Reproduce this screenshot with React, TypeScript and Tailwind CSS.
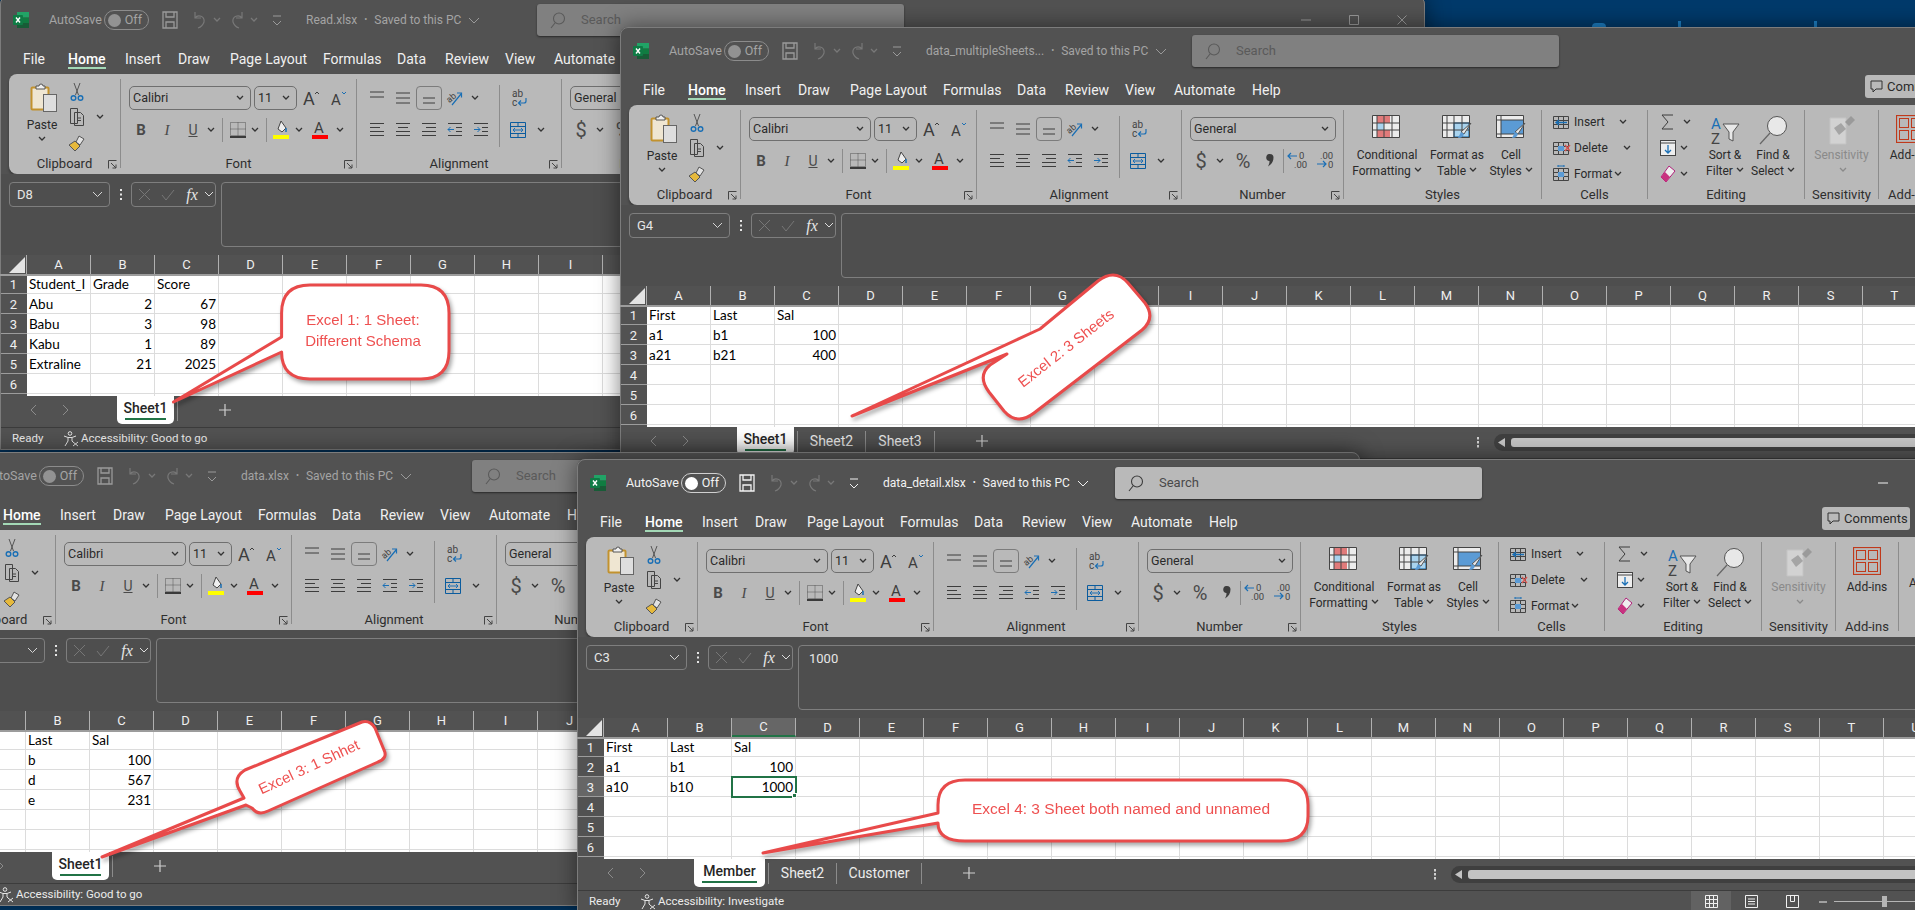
import React from "react";

const COLS = "ABCDEFGHIJKLMNOPQRSTUV".split("");
const MENU: [string, string][] = [
  ["File", "w-[45px]"],
  ["Home", "w-[57px]"],
  ["Insert", "w-[53px]"],
  ["Draw", "w-[52px]"],
  ["Page Layout", "w-[93px]"],
  ["Formulas", "w-[74px]"],
  ["Data", "w-[48px]"],
  ["Review", "w-[60px]"],
  ["View", "w-[49px]"],
  ["Automate", "w-[78px]"],
  ["Help", "w-[40px]"],
];

type IconProps = { d: string; w?: number; h?: number; s?: string; sw?: number };

// plain stroked icon, most of the small ribbon glyphs are just this
function P({ d, w = 16, h = 16, s = "#3d3d3d", sw = 1 }: IconProps) {
  return (
    <svg width={w} height={h} viewBox={`0 0 ${w} ${h}`} fill="none" stroke={s} strokeWidth={sw}>
      <path d={d} />
    </svg>
  );
}

function Chev({ c = "#333" }: { c?: string }) {
  return <P d="M1 1l3 3 3-3" w={8} h={6} s={c} sw={1.3} />;
}

function Slot({ c, children }: { c: string; children?: React.ReactNode }) {
  return <div className={`flex items-center justify-center shrink-0 ${c}`}>{children}</div>;
}

function ExcelLogo() {
  return (
    <svg width="18" height="18" viewBox="0 0 18 18">
      <rect x="5" y="1" width="12" height="5.5" fill="#21a366" />
      <rect x="5" y="6.5" width="12" height="5.5" fill="#107c41" />
      <rect x="5" y="12" width="12" height="5" fill="#185c37" />
      <rect x="1" y="4" width="10" height="10" rx="1" fill="#0f7b45" />
      <path d="M4 6.5l4 5M8 6.5l-4 5" stroke="#fff" strokeWidth="1.4" />
    </svg>
  );
}

function Paste() {
  return (
    <svg width="28" height="30" viewBox="0 0 28 30">
      <rect x="1.5" y="5.5" width="17" height="22" rx="1" fill="#efe6d2" stroke="#c2922e" strokeWidth="2" />
      <path d="M6 7V4h3a2 2 0 0 1 4 0h2v3z" fill="#efefef" stroke="#555" />
      <rect x="13.5" y="12.5" width="13" height="17" fill="#dedede" stroke="#666" />
    </svg>
  );
}

function Scissors() {
  return (
    <svg width="14" height="20" viewBox="0 0 14 20" fill="none">
      <path d="M4 1l4.500 12M10 1L5.500 13" stroke="#555" />
      <circle cx="3.500" cy="16" r="2.300" stroke="#1a6fb5" strokeWidth="1.400" />
      <circle cx="10.500" cy="16" r="2.300" stroke="#1a6fb5" strokeWidth="1.400" />
    </svg>
  );
}

function CopyIcon() {
  return <P d="M1.500 1.500h7v15h-7zM5.500 5.500h6l3 3v10h-9zM8 11h4M8 13.500h4" w={16} h={20} s="#444" />;
}

function Painter() {
  return (
    <svg width="18" height="18" viewBox="0 0 18 18">
      <path d="M11 2l5 3-4 6-4-3z" fill="#e2e2e2" stroke="#555" />
      <path d="M7 7l5 5-5 5-6-6z" fill="#e6b93c" stroke="#555" />
    </svg>
  );
}

function Launcher() {
  return <P d="M.500.500h8M.500.500v8M3 3l5 5M8 4.500V8H4.500" w={10} h={10} s="#444" />;
}

function Combo({ c, label }: { c: string; label: string }) {
  return (
    <div className={`flex items-center justify-between shrink-0 h-6 rounded-[5px] border border-[#6f6f6f] pl-[3px] pr-[6px] text-[12.500px] ${c}`}>
      <span>{label}</span>
      <Chev />
    </div>
  );
}

function BigA({ up }: { up: boolean }) {
  return (
    <svg width="18" height="18" viewBox="0 0 18 18">
      <text x="0" y="16" fontSize={up ? 18 : 15} fontFamily="Roboto" fill="#3d3d3d">A</text>
      <path d={up ? "M12 5l2-2 2 2" : "M11 3l2 2 2-2"} stroke={up ? "#3d3d3d" : "#1a6fb5"} fill="none" />
    </svg>
  );
}

function Borders() {
  return (
    <svg width="16" height="16" viewBox="0 0 16 16" fill="none">
      <path d="M.500.500h15v13H.500zM8 .500v13M.500 7h15" stroke="#555" strokeDasharray="1 1" />
      <path d="M0 15h16" stroke="#111" strokeWidth="1.600" />
    </svg>
  );
}

function FillColor() {
  return (
    <svg width="18" height="20" viewBox="0 0 18 20">
      <path d="M9 1l5 7-4 4-4-3z" fill="#eee" stroke="#444" />
      <path d="M14 8v4" stroke="#1a6fb5" strokeWidth="1.500" />
      <rect x="1" y="15" width="16" height="4" fill="#ffff00" />
    </svg>
  );
}

function FontColor() {
  return (
    <svg width="18" height="20" viewBox="0 0 18 20">
      <text x="3" y="13" fontSize="15" fontFamily="Roboto" fill="#3d3d3d">A</text>
      <rect x="1" y="15" width="16" height="4" fill="#ff0000" />
    </svg>
  );
}

function Orient() {
  return (
    <svg width="18" height="18" viewBox="0 0 18 18" fill="none">
      <text x="0" y="11" fontSize="9" fontFamily="Roboto" fill="#444" transform="rotate(-40 6 8)">ab</text>
      <path d="M6 16L15 5M11 4h4.500v4.500" stroke="#1a6fb5" strokeWidth="1.200" />
    </svg>
  );
}

function Wrap() {
  return (
    <svg width="16" height="20" viewBox="0 0 16 20" fill="none">
      <text x="1" y="9" fontSize="10" fontFamily="Roboto" fill="#444">ab</text>
      <text x="1" y="18" fontSize="10" fontFamily="Roboto" fill="#444">c</text>
      <path d="M15 10v3a2 2 0 0 1-2 2H8M10 12.500L7.500 15l2.500 2.500" stroke="#1a6fb5" strokeWidth="1.200" />
    </svg>
  );
}

function Merge() {
  return (
    <svg width="16" height="16" viewBox="0 0 16 16" fill="none">
      <path d="M.500.500h15v15H.500zM.500 4.500h15M.500 11.500h15M8 .500v4M8 11.500v4" stroke="#0b5c9e" />
      <path d="M3 8h10M5 6L3 8l2 2M11 6l2 2-2 2" stroke="#1a6fb5" />
    </svg>
  );
}

function DecShift({ left }: { left: boolean }) {
  return (
    <svg width="22" height="20" viewBox="0 0 22 20" fill="none">
      <text x={left ? 12 : 6} y="8" fontSize="9.500" fontFamily="Roboto" fill="#444">{left ? "0" : ".00"}</text>
      <text x={left ? 7 : 14} y="17" fontSize="9.500" fontFamily="Roboto" fill="#444">{left ? ".00" : "0"}</text>
      {left ? (
        <path d="M10 5H1M4 2L1 5l3 3" stroke="#1a6fb5" strokeWidth="1.200" />
      ) : (
        <path d="M3 13h9M9 10l3 3-3 3" stroke="#1a6fb5" strokeWidth="1.200" />
      )}
    </svg>
  );
}

// 28x23 table glyph used for the three Styles buttons
function GridGlyph({ kind }: { kind: "cond" | "table" | "cell" }) {
  return (
    <svg width="30" height="24" viewBox="0 0 30 24" fill="none">
      <rect x=".5" y=".5" width="27" height="22" fill="#ececec" />
      {kind === "cond" && (
        <>
          <rect x="5" y="1" width="13" height="7" fill="#e07a7a" />
          <rect x="5" y="15" width="13" height="7" fill="#e07a7a" />
          <rect x="5" y="8" width="7" height="7" fill="#a9d3ee" />
        </>
      )}
      {kind === "table" && <rect x="12" y="8" width="15" height="14" fill="#a9d3ee" stroke="#0b5c9e" />}
      {kind === "cell" && <rect x="5" y="5" width="22" height="14" fill="#5b9bd5" />}
      <path
        d={
          kind === "cell"
            ? "M.500.500h27v22H.500zM.500 5h27M5 .500v22M.500 19h27M27 .500"
            : "M.500.500h27v22H.500zM.500 8h27M.500 15h27M5 .500v22M12 .500v22M20 .500v22"
        }
        stroke="#444"
      />
      {kind !== "cond" && (
        <>
          <path d="M29 8L22 19l-3-2z" fill="#e8e8e8" stroke="#555" />
          <path d="M19 17l3 2c-1 3-3 4-6 4 1-2 2-4 3-6z" fill="#5b9bd5" />
        </>
      )}
    </svg>
  );
}

function CellsGlyph({ kind }: { kind: "insert" | "delete" | "format" }) {
  return (
    <svg width="20" height="18" viewBox="0 0 20 18" fill="none">
      <path d="M1.500 3.500h15v12h-15zM1.500 7.500h15M1.500 11.500h15M6.500 3.500v12M11.500 3.500v12" stroke="#444" />
      {kind === "insert" && <path d="M15 9.500H4M7 7L4 9.500 7 12" stroke="#1a6fb5" strokeWidth="1.400" />}
      {kind === "delete" && (
        <>
          <rect x="6" y="7" width="6" height="5" fill="#5b9bd5" />
          <path d="M13 6l5 6M18 6l-5 6" stroke="#d9534f" strokeWidth="1.300" />
        </>
      )}
      {kind === "format" && (
        <>
          <rect x="6" y="7" width="6" height="5" fill="#5b9bd5" />
          <path d="M6 1h6M6 0v2M12 0v2" stroke="#1a6fb5" />
        </>
      )}
    </svg>
  );
}

function FillDown() {
  return (
    <svg width="16" height="16" viewBox="0 0 16 16" fill="none">
      <rect x=".5" y=".5" width="15" height="15" fill="#eee" stroke="#444" />
      <path d="M.500 3h15" stroke="#444" />
      <path d="M8 5v8M5 10l3 3 3-3" stroke="#1a6fb5" strokeWidth="1.300" />
    </svg>
  );
}

function Eraser() {
  return (
    <svg width="16" height="18" viewBox="0 0 16 18">
      <path d="M9 1l6 5-9 11-5-5z" fill="#eee" stroke="#b0207a" />
      <path d="M5 7l5 5-4 5-5-5z" fill="#c8327f" />
    </svg>
  );
}

function SortIcon() {
  return (
    <svg width="30" height="30" viewBox="0 0 30 30" fill="none">
      <text x="1" y="14" fontSize="15" fontFamily="Roboto" fill="#1a6fb5">A</text>
      <text x="1" y="29" fontSize="15" fontFamily="Roboto" fill="#444">Z</text>
      <path d="M13 9h16l-6 8v9l-4-2v-7z" fill="#e8e8e8" stroke="#555" />
    </svg>
  );
}

function FindIcon() {
  return (
    <svg width="30" height="30" viewBox="0 0 30 30" fill="none">
      <circle cx="19" cy="11" r="9.500" fill="#e8e8e8" stroke="#555" />
      <path d="M12 18L2 29" stroke="#666" strokeWidth="1.200" />
    </svg>
  );
}

function SensitivityIcon() {
  return (
    <svg width="28" height="30" viewBox="0 0 28 30">
      <path d="M2 3h16v26H2z" fill="#d2d2d2" stroke="#c4c4c4" />
      <path d="M6 13l7-5 5 6-7 6z" fill="#a5a5a5" />
      <path d="M17 7l6-6 4 4-6 6z" fill="#9a9a9a" />
    </svg>
  );
}

function AddIns() {
  return (
    <svg width="28" height="28" viewBox="0 0 28 28" fill="none" stroke="#c0391b">
      <rect x=".5" y=".5" width="27" height="27" strokeWidth="1.200" />
      <rect x="3.500" y="3.500" width="9" height="9" />
      <rect x="15.500" y="3.500" width="9" height="9" />
      <rect x="3.500" y="15.500" width="9" height="9" />
      <rect x="15.500" y="15.500" width="9" height="9" />
    </svg>
  );
}

function Group({
  w,
  label,
  launcher,
  children,
}: {
  w: string;
  label?: string;
  launcher?: boolean;
  children: React.ReactNode;
}) {
  return (
    <div className={`flex flex-col shrink-0 h-[89px] my-[5px] border-r border-[#8c8c8c] ${w}`}>
      <div className="flex-1 min-h-0">{children}</div>
      <div className="relative h-[14px] -mb-[3px] text-center text-[13px] leading-[14px] text-[#2e2e2e]">
        {label}
        {launcher && (
          <span className="absolute right-[2px] top-[3px]">
            <Launcher />
          </span>
        )}
      </div>
    </div>
  );
}

function BigButton({
  c,
  icon,
  lines,
  chevron,
  dim,
}: {
  c: string;
  icon: React.ReactNode;
  lines: string[];
  chevron?: boolean;
  dim?: boolean;
}) {
  return (
    <div className={`flex flex-col items-center shrink-0 pt-[5px] ${c}`}>
      <div className="h-[32px] flex items-start">{icon}</div>
      <div className={`text-[12px] leading-[16px] text-center whitespace-nowrap ${dim ? "text-[#8a8a8a]" : "text-[#2a2a2a]"}`}>
        {lines[0]}
        <br />
        {lines[1]}
        {chevron && (
          <span className="inline-block ml-[3px] align-[2px]">
            <Chev c={dim ? "#8a8a8a" : "#333"} />
          </span>
        )}
      </div>
    </div>
  );
}

function Ribbon() {
  return (
    <div className="flex h-[100px] ml-[9px] mr-[9px] shrink-0 rounded-lg bg-[#b9b9b9] overflow-hidden shadow-[0_2px_3px_rgba(0,0,0,0.35)] text-[#2a2a2a]">
      <Group w="w-[112px]" label="Clipboard" launcher>
        <div className="flex pl-2">
          <div className="flex flex-col items-center w-[50px] pt-[3px]">
            <div className="ml-1">
              <Paste />
            </div>
            <div className="text-[12px] leading-[16px] mt-[5px]">Paste</div>
            <div className="mt-[3px]">
              <Chev />
            </div>
          </div>
          <div className="flex flex-col">
            <div className="flex h-[25.500px]">
              <Slot c="w-[20px]"><Scissors /></Slot>
            </div>
            <div className="flex h-[25.500px]">
              <Slot c="w-[20px]"><CopyIcon /></Slot>
              <Slot c="w-[26px]"><Chev /></Slot>
            </div>
            <div className="flex h-[25.500px]">
              <Slot c="w-[20px]"><Painter /></Slot>
            </div>
          </div>
        </div>
      </Group>
      <Group w="w-[236px]" label="Font" launcher>
        <div className="flex mt-[7px] pl-2 gap-[3px]">
          <Combo c="w-[122px]" label="Calibri" />
          <Combo c="w-[43px]" label="11" />
          <Slot c="w-[23px] h-6"><BigA up /></Slot>
          <Slot c="w-[28px] h-6"><BigA up={false} /></Slot>
        </div>
        <div className="flex items-center mt-[8px] ml-[7px] h-[24px] text-[#4a4a4a]">
          <Slot c="w-[26px] font-bold text-[15px] font-[Roboto,sans-serif]">B</Slot>
          <Slot c="w-[26px] italic text-[15px] font-['Liberation_Serif',serif]">I</Slot>
          <Slot c="w-[26px] underline text-[14px]">U</Slot>
          <Slot c="w-[10px]"><Chev /></Slot>
          <Slot c="w-[12px] h-[24px]"><div className="w-px h-full bg-[#8c8c8c]" /></Slot>
          <Slot c="w-[20px]"><Borders /></Slot>
          <Slot c="w-[14px]"><Chev /></Slot>
          <Slot c="w-[8px] h-[24px]"><div className="w-px h-full bg-[#8c8c8c]" /></Slot>
          <Slot c="w-[22px]"><FillColor /></Slot>
          <Slot c="w-[14px]"><Chev /></Slot>
          <Slot c="w-[28px]"><FontColor /></Slot>
          <Slot c="w-[12px]"><Chev /></Slot>
        </div>
      </Group>
      <Group w="w-[205px]" label="Alignment" launcher>
        <div className="flex">
          <div className="w-[142px] pl-[7px]">
            <div className="flex items-center mt-[7px] h-6">
              <Slot c="w-[26px]"><P d="M1 2h14M1 7h14" /></Slot>
              <Slot c="w-[26px]"><P d="M1 3h14M1 8h14M1 13h14" /></Slot>
              <Slot c="w-[26px] h-6 rounded-[4px] border border-[#7c7c7c]"><P d="M2 8h12M2 13h12" /></Slot>
              <Slot c="w-[26px]"><Orient /></Slot>
              <Slot c="w-[14px]"><Chev /></Slot>
            </div>
            <div className="flex items-center mt-[8px] h-6">
              <Slot c="w-[26px]"><P d="M1 1.500h14M1 5.500h10M1 9.500h14M1 13.500h14" /></Slot>
              <Slot c="w-[26px]"><P d="M1 1.500h14M3 5.500h10M1 9.500h14M1 13.500h14" /></Slot>
              <Slot c="w-[26px]"><P d="M1 1.500h14M5 5.500h10M1 9.500h14M1 13.500h14" /></Slot>
              <Slot c="w-[26px]">
                <svg width="16" height="16" viewBox="0 0 16 16" fill="none">
                  <path d="M1 1.500h14M9 5.500h6M9 9.500h6M1 13.500h14" stroke="#3d3d3d" />
                  <path d="M7 7.500H1M3.500 5L1 7.500 3.500 10" stroke="#1a6fb5" />
                </svg>
              </Slot>
              <Slot c="w-[26px]">
                <svg width="16" height="16" viewBox="0 0 16 16" fill="none">
                  <path d="M1 1.500h14M9 5.500h6M9 9.500h6M1 13.500h14" stroke="#3d3d3d" />
                  <path d="M1 7.500h6M4.500 5L7 7.500 4.500 10" stroke="#1a6fb5" />
                </svg>
              </Slot>
            </div>
          </div>
          <div className="w-px h-[62px] mt-[6px] bg-[#8c8c8c]" />
          <div className="flex flex-col">
            <Slot c="w-[38px] mt-[7px] h-6"><Wrap /></Slot>
            <div className="flex items-center mt-[8px] h-6">
              <Slot c="w-[36px]"><Merge /></Slot>
              <Slot c="w-[10px]"><Chev /></Slot>
            </div>
          </div>
        </div>
      </Group>
      <Group w="w-[162px]" label="Number" launcher>
        <div className="mt-[7px] pl-2">
          <Combo c="w-[146px]" label="General" />
        </div>
        <div className="flex items-center mt-[8px] ml-[10px] h-6 text-[#4a4a4a]">
          <Slot c="w-[18px] text-[20px] font-[Roboto,sans-serif]">$</Slot>
          <Slot c="w-[20px]"><Chev /></Slot>
          <Slot c="w-[26px] text-[20px] font-[Roboto,sans-serif]">%</Slot>
          <Slot c="w-[26px]">
            <svg width="9" height="14" viewBox="0 0 9 14">
              <path d="M5 0a3.500 3.500 0 0 1 3.500 3.500c0 4-2 7-5.500 9 1-2 1.500-3.500 1.500-5.500A3.500 3.500 0 0 1 5 0z" fill="#3d3d3d" />
            </svg>
          </Slot>
          <Slot c="w-[3px] h-6"><div className="w-px h-full bg-[#8c8c8c]" /></Slot>
          <Slot c="w-[26px]"><DecShift left /></Slot>
          <Slot c="w-[27px]"><DecShift left={false} /></Slot>
        </div>
      </Group>
      <Group w="w-[198px]" label="Styles">
        <div className="flex pl-1">
          <BigButton c="w-[78px]" icon={<GridGlyph kind="cond" />} lines={["Conditional", "Formatting"]} chevron />
          <BigButton c="w-[62px]" icon={<GridGlyph kind="table" />} lines={["Format as", "Table"]} chevron />
          <BigButton c="w-[46px]" icon={<GridGlyph kind="cell" />} lines={["Cell", "Styles"]} chevron />
        </div>
      </Group>
      <Group w="w-[106px]" label="Cells">
        <div className="-mt-px pl-[10px] text-[12px]">
          <div className="flex items-center h-[26px]">
            <Slot c="w-[20px]"><CellsGlyph kind="insert" /></Slot>
            <div className="ml-[2px] w-[44px]">Insert</div>
            <Slot c="w-[10px]"><Chev /></Slot>
          </div>
          <div className="flex items-center h-[26px]">
            <Slot c="w-[20px]"><CellsGlyph kind="delete" /></Slot>
            <div className="ml-[2px] w-[48px]">Delete</div>
            <Slot c="w-[10px]"><Chev /></Slot>
          </div>
          <div className="flex items-center h-[26px]">
            <Slot c="w-[20px]"><CellsGlyph kind="format" /></Slot>
            <div className="ml-[2px] w-[39px]">Format</div>
            <Slot c="w-[10px]"><Chev /></Slot>
          </div>
        </div>
      </Group>
      <Group w="w-[157px]" label="Editing">
        <div className="flex">
          <div className="w-[52px] -mt-px pl-[10px]">
            <div className="flex items-center h-[26px]">
              <Slot c="w-[20px]"><P d="M2 2h11M2 2l6 7-6 7h11" w={16} h={18} /></Slot>
              <Slot c="w-[18px]"><Chev /></Slot>
            </div>
            <div className="flex items-center h-[26px]">
              <Slot c="w-[20px]"><FillDown /></Slot>
              <Slot c="w-[12px]"><Chev /></Slot>
            </div>
            <div className="flex items-center h-[26px]">
              <Slot c="w-[20px]"><Eraser /></Slot>
              <Slot c="w-[12px]"><Chev /></Slot>
            </div>
          </div>
          <BigButton c="w-[50px]" icon={<SortIcon />} lines={["Sort &", "Filter"]} chevron />
          <BigButton c="w-[46px]" icon={<FindIcon />} lines={["Find &", "Select"]} chevron />
        </div>
      </Group>
      <Group w="w-[74px]" label="Sensitivity">
        <BigButton c="w-full" icon={<SensitivityIcon />} lines={["Sensitivity", ""]} chevron dim />
      </Group>
      <Group w="w-[63px]" label="Add-ins">
        <BigButton c="w-full" icon={<AddIns />} lines={["Add-ins", ""]} />
      </Group>
      <div className="pl-[10px] pt-[37px] text-[12px] whitespace-nowrap">Analyze</div>
    </div>
  );
}

function SearchGlass({ c }: { c: string }) {
  return <P d="M9 7.500m-5.500 0a5.500 5.500 0 1 0 11 0a5.500 5.500 0 1 0-11 0M5 12l-4 5" w={16} h={18} s={c} sw={1.100} />;
}

type WindowProps = {
  pos: string;
  file: string;
  titleWidth: string;
  active?: boolean;
  name: string;
  formula?: string;
  rows: (string | number)[][];
  selected?: boolean;
  tabs: string[];
  activeTabWidth: string;
  tabWidths: string[];
  accessibility: string;
};

function ExcelWindow({
  pos,
  file,
  titleWidth,
  active,
  name,
  formula,
  rows,
  selected,
  tabs,
  activeTabWidth,
  tabWidths,
  accessibility,
}: WindowProps) {
  const dim = active ? "text-[#f2f2f2]" : "text-[#a4a4a4]";
  const stroke = active ? "#f2f2f2" : "#9a9a9a";

  return (
    <div
      className={`absolute isolate ${pos} w-[1425px] h-[454px] flex flex-col overflow-hidden rounded-t-lg bg-[#525252] outline-1 -outline-offset-1 outline-[#7c7c7c] shadow-[0_0_22px_rgba(0,0,0,0.5)] font-[Roboto,sans-serif]`}
    >
      {/* title bar */}
      <div className={`flex items-center h-8 mt-2 shrink-0 text-[12.500px] ${dim}`}>
        <Slot c="w-[49px] pr-[8px]"><ExcelLogo /></Slot>
        <div className="w-[55px]">AutoSave</div>
        <div
          className={`flex items-center justify-between w-[45px] h-5 rounded-full border pl-[3px] pr-[6px] ${
            active ? "border-[#d0d0d0]" : "border-[#8c8c8c]"
          }`}
        >
          <span className={`w-[13px] h-[13px] rounded-full ${active ? "bg-white" : "bg-[#929292]"}`} />
          <span>Off</span>
        </div>
        <Slot c="w-[42px]"><P d="M1 1h14v16H1zM4 1v5h8V1M4 17v-6h8v6" w={16} h={18} s={stroke} sw={1.300} /></Slot>
        <Slot c="w-[16px]"><P d="M4 1v6h6M4 7c3-4 10-2 9 4-1 3-3 5-6 6" w={16} h={18} s="#787878" sw={1.200} /></Slot>
        <Slot c="w-[19px]"><Chev c="#787878" /></Slot>
        <Slot c="w-[23px]"><P d="M12 1v6H6M12 7C9 3 2 5 3 11c1 3 3 5 6 6" w={16} h={18} s="#787878" sw={1.200} /></Slot>
        <Slot c="w-[10px]"><Chev c="#787878" /></Slot>
        <Slot c="w-[36px]"><P d="M1 1h8M1 6l4 4 4-4" w={10} h={11} s={stroke} /></Slot>
        <div className={`flex items-center shrink-0 ml-[11px] gap-[7px] text-[12px] whitespace-nowrap ${titleWidth}`}>
          <span>{file}</span>
          <span className="text-[9px]">•</span>
          <span>Saved to this PC</span>
          <P d="M1 1l5 5 5-5" w={12} h={7} s={stroke} />
        </div>
        <div
          className={`flex items-center w-[367px] h-full shrink-0 rounded-[3px] pl-[13px] gap-[15px] shadow-[0_1px_2px_rgba(0,0,0,0.5)] ${
            active ? "bg-[#b9b9b9] text-[#4a4a4a]" : "bg-[#808080] text-[#5a5a5a]"
          }`}
        >
          <SearchGlass c={active ? "#3d3d3d" : "#5a5a5a"} />
          <span className="text-[13px]">Search</span>
        </div>
        <div className="flex items-center ml-auto mr-[-1px]">
          <Slot c="w-[48px]"><P d="M0 5h10" w={10} h={10} s={stroke} /></Slot>
          <Slot c="w-[48px]"><P d="M.500.500h9v9h-9z" w={10} h={10} s={stroke} /></Slot>
          <Slot c="w-[48px]"><P d="M.500.500l9 9M9.500.500l-9 9" w={10} h={10} s={stroke} /></Slot>
        </div>
      </div>

      {/* menu */}
      <div className="relative flex items-center h-[38px] pt-2 pl-[23px] shrink-0 text-[14px] text-[#f0f0f0]">
        {MENU.map(([label, w]) => (
          <div key={label} className={`shrink-0 ${w}`}>
            {label === "Home" ? (
              <span className="relative inline-block font-medium text-white">
                {label}
                <span className="absolute left-0 right-0 top-[18px] h-[2px] bg-[#a3d8b6]" />
              </span>
            ) : (
              label
            )}
          </div>
        ))}
        <div className="absolute left-[1245px] top-[8px] flex items-center gap-[4px] w-[88px] h-[23px] pl-[5px] rounded-[3px] bg-[#b9b9b9] text-[13px] text-[#2a2a2a]">
          <P d="M1 1h11v8H6l-3 3V9H1z" w={13} h={13} s="#333" />
          Comments
        </div>
      </div>

      <Ribbon />

      {/* formula bar */}
      <div className="flex h-[81px] py-2 pl-[9px] pr-[9px] shrink-0 text-[#e6e6e6] bg-[#4e4e4e]">
        <div className="flex items-center justify-between w-[101px] h-[25px] rounded-[4px] border border-[#7e7e7e] pl-[7px] pr-[6px] text-[13px]">
          {name}
          <P d="M1 1l4.500 4.500L10 1" w={11} h={7} s="#d5d5d5" />
        </div>
        <Slot c="w-[21px] h-[25px]">
          <P d="M1 1v2M1 5.500v2M1 10v2" w={2} h={13} s="#e5e5e5" sw={2} />
        </Slot>
        <div className="flex items-center w-[85px] h-[25px] rounded-[4px] border border-[#7e7e7e]">
          <Slot c="w-[24px]"><P d="M1 1l11 11M12 1L1 12" w={13} h={13} s="#777" /></Slot>
          <Slot c="w-[24px]"><P d="M1 7l4 5 8-10" w={14} h={13} s="#777" /></Slot>
          <Slot c="w-[24px] italic font-['Liberation_Serif',serif] text-[16px] text-[#e6e6e6]">fx</Slot>
          <Slot c="w-[10px]"><P d="M1 1l4 4 4-4" w={10} h={7} s="#ddd" /></Slot>
        </div>
        <div className="flex-1 ml-[5px] rounded-[4px] border border-[#7e7e7e] pl-[10px] pt-[3px] text-[13px]">
          {formula}
        </div>
      </div>

      {/* column headers */}
      <div className="relative z-10 flex h-[19px] shrink-0 border-b-2 border-[#9c9c9c] box-content -mb-[2px] text-[13px] text-[#efefef]">
        <div className="flex items-end justify-end w-[27px] shrink-0 pr-[1px] pb-[1px] border-r border-[#b0b0b0]">
          <svg width="16" height="16" viewBox="0 0 16 16">
            <path d="M16 0v16H0z" fill="#e4e4e4" />
          </svg>
        </div>
        {COLS.map((col) => (
          <div
            key={col}
            className={`flex items-center justify-center w-16 shrink-0 border-r border-[#b0b0b0] ${
              selected && col === "C" ? "bg-[#666666] border-b-2 border-b-[#217346]" : ""
            }`}
          >
            {col}
          </div>
        ))}
      </div>

      {/* sheet */}
      <div className="h-[122px] shrink-0 overflow-hidden bg-white font-[Lato,sans-serif] text-[13.500px] text-black">
        {[1, 2, 3, 4, 5, 6, 7].map((n) => {
          const row = rows[n - 1] || [];
          return (
            <div key={n} className="flex h-5">
              <div
                className={`flex items-center justify-center w-[27px] shrink-0 pt-[2px] border-b border-[#9c9c9c] font-[Roboto,sans-serif] text-[13px] text-[#efefef] ${
                  selected && n === 3 ? "bg-[#666666]" : "bg-[#525252]"
                }`}
              >
                {n}
              </div>
              {COLS.map((col, i) => {
                const v = row[i];
                const isNumber = typeof v === "number";
                const isActive = selected && n === 3 && col === "C";
                return (
                  <div
                    key={col}
                    className={`relative flex items-center w-16 shrink-0 overflow-hidden whitespace-nowrap border-r border-b border-[#dcdcdc] px-[2px] pt-[2px] ${
                      isNumber ? "justify-end" : ""
                    } ${isActive ? "outline-2 -outline-offset-1 outline-[#217346] overflow-visible z-10" : ""}`}
                  >
                    {v}
                    {isActive && (
                      <span className="absolute -right-[2px] -bottom-[2px] w-[5px] h-[5px] bg-[#217346] border border-white" />
                    )}
                  </div>
                );
              })}
            </div>
          );
        })}
      </div>

      {/* sheet tabs */}
      <div className="flex h-[32px] shrink-0 border-b border-[#3c3c3c] text-[14px] text-[#ececec]">
        <div className="flex w-[850px] shrink-0">
          <Slot c="w-[32px] h-[28px] ml-[17px]"><P d="M6 1L1 6l5 5" w={7} h={12} s="#8c8c8c" /></Slot>
          <Slot c="w-[32px] h-[28px]"><P d="M1 1l5 5-5 5" w={7} h={12} s="#8c8c8c" /></Slot>
          <div className="w-[36px] shrink-0" />
          <div className={`shrink-0 flex flex-col items-center h-[28px] rounded-b-[5px] bg-white text-[#262626] font-medium pt-[4px] ${activeTabWidth}`}>
            <span className="leading-[16px]">{tabs[0]}</span>
            <span className="self-stretch mx-2 mt-[2px] h-[2px] bg-[#217346]" />
          </div>
          <div className="w-1 shrink-0 border-r border-[#8c8c8c] my-1 h-[21px]" />
          {tabs.slice(1).map((t, i) => (
            <div key={t} className={`flex items-center justify-center shrink-0 h-[21px] my-1 border-r border-[#8c8c8c] ${tabWidths[i]}`}>
              {t}
            </div>
          ))}
          <Slot c="w-[16px] h-[28px] ml-[39px]"><P d="M7 1v12M1 7h12" w={14} h={14} s="#cfcfcf" sw={1.200} /></Slot>
        </div>
        <Slot c="w-[16px] h-[28px] pt-[3px]"><P d="M1 0v2.500M1 4v2.500M1 8v2.500" w={2} h={11} s="#d0d0d0" sw={2} /></Slot>
        <div className="flex items-center flex-1 h-[17px] ml-[8px] mt-[7px] pl-[4px] rounded-l-full bg-[#3f3f3f]">
          <svg width="8" height="9" viewBox="0 0 8 9" className="shrink-0">
            <path d="M7 0v9L0 4.500z" fill="#c3c3c3" />
          </svg>
          <div className="flex-1 h-[9px] ml-[5px] rounded-l-[3px] bg-[#c3c3c3]" />
        </div>
      </div>

      {/* status bar */}
      <div className="flex items-center h-[21px] shrink-0 text-[11.500px] text-[#ececec]">
        <div className="flex items-center w-[1114px] shrink-0">
          <div className="w-[63px] pl-3">Ready</div>
          <svg width="16" height="16" viewBox="0 0 16 16" fill="none" stroke="#e6e6e6">
            <circle cx="7" cy="2.500" r="1.800" />
            <path d="M1 5l4 1.500h4L13 5M5 7v3l-3 5M9 7v3l1 1M10 11l5 4M15 11l-5 4" />
          </svg>
          <span className="ml-[2px]">Accessibility: {accessibility}</span>
        </div>
        <Slot c="w-[40px] h-full bg-[#626262]"><P d="M.500.500h12v12H.500zM4.500.500v12M8.500.500v12M.500 4.500h12M.500 8.500h12" w={13} h={13} s="#f0f0f0" /></Slot>
        <Slot c="w-[41px]"><P d="M.500.500h12v12H.500zM3 4h7M3 6.500h7M3 9h7" w={13} h={13} s="#f0f0f0" /></Slot>
        <Slot c="w-[40px]"><P d="M.500.500h12v12H.500zM4.500.500v6h4v-6" w={13} h={13} s="#f0f0f0" /></Slot>
        <Slot c="w-[18px] ml-[2px]"><P d="M0 1h8" w={8} h={2} s="#f0f0f0" /></Slot>
        <div className="relative flex items-center flex-1 ml-[2px] h-full">
          <div className="w-full h-px bg-[#b5b5b5]" />
          <div className="absolute left-[48px] w-[5px] h-[11px] bg-[#b5b5b5]" />
        </div>
      </div>
    </div>
  );
}

// red speech bubbles sitting on top of the windows
function Callouts() {
  const red = "#e84a4a";
  return (
    <svg
      width="1915"
      height="910"
      viewBox="0 0 1915 910"
      className="absolute left-0 top-0 z-20 pointer-events-none drop-shadow-[2px_3px_2px_rgba(0,0,0,0.35)]"
    >
      <g fill="#fff" stroke={red} strokeWidth="3" strokeLinejoin="round">
        <path d="M173.500 402L281.600 337V313Q281.600 285 310 285H421Q449 285 449 313V351Q449 379 421 379H310Q281.600 379 281.600 352Z" />
        <path d="M852 416L1040 329L1098 281Q1115 268 1128 283L1145 303Q1156 318 1142 330L1034 413Q1017 426 1004 411L989 392Q977 376 990 365L1007 354Z" />
        <path d="M102 857L244 798L240 791Q232 778 245 770L362 722Q370 720 375 728L384 750Q388 758 378 762L268 811Q258 816 252 808L246 805Z" />
        <path d="M763 853L938 813V805Q938 780 965 780H1281Q1308 780 1308 805V816Q1308 841 1281 841H965Q938 841 938 823Z" />
      </g>
      <g fill="#ee5050" fontFamily="Liberation Sans, sans-serif" fontSize="15" textAnchor="middle">
        <text x="363" y="325">Excel 1: 1 Sheet:</text>
        <text x="363" y="346">Different Schema</text>
        <text x="1066" y="353" transform="rotate(-38 1066 348)">Excel 2: 3 Sheets</text>
        <text x="309" y="772" transform="rotate(-25 309 767)">Excel 3: 1 Shhet</text>
        <text x="1121" y="814" fontSize="15.500">Excel 4: 3 Sheet both named and unnamed</text>
      </g>
    </svg>
  );
}

export default function App() {
  return (
    <div className="relative w-[1915px] h-[910px] overflow-hidden bg-[#003a6b]">
      {/* bits of the desktop wallpaper showing behind the windows */}
      <div className="absolute left-[1592px] top-[23px] w-[14px] h-[4px] rounded-t-full bg-[#1d7fc4]" />
      <div className="absolute left-[1678px] top-[21px] w-[3px] h-[6px] bg-[#1d7fc4]" />
      <div className="absolute left-[1814px] top-[21px] w-[3px] h-[6px] bg-[#1d7fc4]" />

      <ExcelWindow
        pos="left-0 -top-[4px]"
        file="Read.xlsx"
        titleWidth="w-[231px]"
        name="D8"
        rows={[
          ["Student_I", "Grade", "Score"],
          ["Abu", 2, 67],
          ["Babu", 3, 98],
          ["Kabu", 1, 89],
          ["Extraline", 21, 2025],
        ]}
        tabs={["Sheet1"]}
        activeTabWidth="w-[57px]"
        tabWidths={[]}
        accessibility="Good to go"
      />
      <ExcelWindow
        pos="left-[620px] top-[27px]"
        file="data_multipleSheets..."
        titleWidth="w-[266px]"
        name="G4"
        rows={[
          ["First", "Last", "Sal"],
          ["a1", "b1", 100],
          ["a21", "b21", 400],
        ]}
        tabs={["Sheet1", "Sheet2", "Sheet3"]}
        activeTabWidth="w-[57px]"
        tabWidths={["w-[68px]", "w-[69px]"]}
        accessibility="Good to go"
      />
      <ExcelWindow
        pos="-left-[65px] top-[452px]"
        file="data.xlsx"
        titleWidth="w-[231px]"
        name="A1"
        rows={[
          ["First", "Last", "Sal"],
          ["a", "b", 100],
          ["c", "d", 567],
          ["e", "e", 231],
        ]}
        tabs={["Sheet1"]}
        activeTabWidth="w-[57px]"
        tabWidths={[]}
        accessibility="Good to go"
      />
      <ExcelWindow
        pos="left-[577px] top-[459px]"
        file="data_detail.xlsx"
        titleWidth="w-[232px]"
        active
        name="C3"
        formula="1000"
        selected
        rows={[
          ["First", "Last", "Sal"],
          ["a1", "b1", 100],
          ["a10", "b10", 1000],
        ]}
        tabs={["Member", "Sheet2", "Customer"]}
        activeTabWidth="w-[71px]"
        tabWidths={["w-[68px]", "w-[85px]"]}
        accessibility="Investigate"
      />
      <Callouts />
    </div>
  );
}
